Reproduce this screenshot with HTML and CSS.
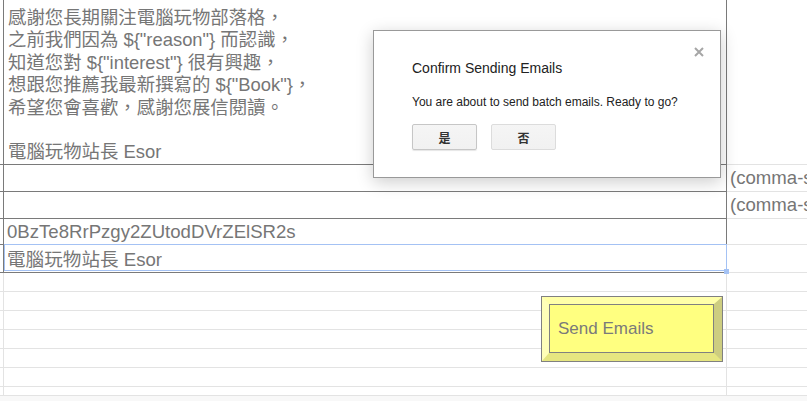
FILE: index.html
```html
<!DOCTYPE html>
<html>
<head>
<meta charset="utf-8">
<link rel="stylesheet" href="styles.css">
</head>
<body>
<div class="sheet">
  <div class="row r-msg">
    <div class="gut"></div>
    <div class="main">
      <div class="msg">感謝您長期關注電腦玩物部落格，<br>之前我們因為 ${"reason"} 而認識，<br>知道您對 ${"interest"} 很有興趣，<br>想跟您推薦我最新撰寫的 ${"Book"}，<br>希望您會喜歡，感謝您展信閱讀。<br><br>電腦玩物站長 Esor</div>
    </div>
    <div class="side"></div>
  </div>
  <div class="row r-b">
    <div class="gut"></div>
    <div class="main"></div>
    <div class="side"><span class="ctext">(comma-separated)</span></div>
  </div>
  <div class="row r-c">
    <div class="gut"></div>
    <div class="main"></div>
    <div class="side"><span class="ctext">(comma-separated)</span></div>
  </div>
  <div class="row r-d">
    <div class="gut"></div>
    <div class="main"><span class="ctext">0BzTe8RrPzgy2ZUtodDVrZElSR2s</span></div>
    <div class="side"></div>
  </div>
  <div class="row r-e">
    <div class="gut"></div>
    <div class="main"><span class="ctext low">電腦玩物站長 Esor</span></div>
    <div class="side"></div>
  </div>
  <div class="row lite"><div class="gut"></div><div class="main"></div><div class="side"></div></div>
  <div class="row lite"><div class="gut"></div><div class="main"></div><div class="side"></div></div>
  <div class="row lite"><div class="gut"></div><div class="main"></div><div class="side"></div></div>
  <div class="row lite"><div class="gut"></div><div class="main"></div><div class="side"></div></div>
  <div class="row lite"><div class="gut"></div><div class="main"></div><div class="side"></div></div>
  <div class="row lite"><div class="gut"></div><div class="main"></div><div class="side"></div></div>
  <div class="row lite last"><div class="gut"></div><div class="main"></div><div class="side"></div></div>
  <div class="footer"></div>
</div>

<div class="selection"></div>
<div class="handle"></div>

<div class="drawing">
  <div class="bevel">
    <div class="face">Send Emails</div>
  </div>
</div>

<div class="dialog">
  <svg class="close" width="10" height="10" viewBox="0 0 10 10"><path d="M1 1L9 9M9 1L1 9" stroke="#a6a6a6" stroke-width="2"/></svg>
  <div class="title">Confirm Sending Emails</div>
  <div class="text">You are about to send batch emails. Ready to go?</div>
  <div class="buttons">
    <button class="btn">是</button>
    <button class="btn">否</button>
  </div>
</div>
</body>
</html>
```

FILE: styles.css
```css
* { box-sizing: border-box; margin: 0; padding: 0; }
html, body { width: 807px; height: 401px; overflow: hidden; background: #fff; }
body {
  position: relative;
  font-family: "Liberation Sans", Arial, "Noto Sans CJK TC", sans-serif;
  color: #767676;
}
.sheet { display: flex; flex-direction: column; }
.row { display: flex; }
.gut { width: 3px; border-bottom: 1px solid #7a7a7a; }
.main {
  width: 724px;
  border-left: 1px solid #7a7a7a;
  border-right: 1px solid #7a7a7a;
  border-bottom: 1px solid #7a7a7a;
  overflow: hidden;
  white-space: nowrap;
}
.side {
  flex: 1;
  border-bottom: 1px solid #e3e3e3;
  overflow: hidden;
  white-space: nowrap;
}
.r-msg { height: 165px; }
.r-b, .r-c { height: 27px; }
.r-d { height: 26px; }
.r-e { height: 28px; }
.lite { height: 19px; }
.lite .gut, .lite .main, .lite .side { border-color: #e3e3e3; }
.last { height: 8px; }
.last .gut, .last .main, .last .side { border-bottom: none; }
.footer { height: 6px; background: #f8f8f8; border-top: 1px solid #e3e3e3; }

.msg {
  padding: 7px 0 0 4px;
  font-size: 18.4px;
  line-height: 22.4px;
  white-space: nowrap;
}
.ctext {
  display: block;
  padding: 2px 0 0 3px;
  font-size: 18.6px;
  line-height: 22px;
}
.ctext.low { padding-top: 4px; }

.selection {
  position: absolute;
  left: 4px; top: 244px;
  width: 723px; height: 27px;
  border: 1px solid #a4c2f4;
}
.handle {
  position: absolute;
  left: 724px; top: 269px;
  width: 5px; height: 5px;
  background: #a4c2f4;
}

.drawing {
  position: absolute;
  left: 541px; top: 296px;
  width: 182px; height: 66px;
  border: 1px solid #808080;
}
.bevel {
  width: 100%; height: 100%;
  border-style: solid;
  border-width: 7px 8px 8px 7px;
  border-color: #ffffa8 #cdcd80 #e6e680 #ffffb8;
}
.face {
  width: 100%; height: 100%;
  background: #ffff80;
  border: 1px solid #808080;
  padding-left: 8px;
  display: flex;
  align-items: center;
  font-size: 17px;
  color: #7a7a7a;
}

.dialog {
  position: absolute;
  left: 373px; top: 30px;
  width: 348px; height: 148px;
  background: #fff;
  border: 1px solid #999;
  box-shadow: 0 4px 16px rgba(0,0,0,0.2);
  padding: 28px 0 0 38px;
  color: #222;
}
.close { position: absolute; left: 320px; top: 16px; }
.title { font-size: 14px; line-height: 18px; }
.text { margin-top: 17px; font-size: 12px; line-height: 16px; }
.buttons { margin-top: 14px; display: flex; gap: 14px; }
.btn {
  width: 65px; height: 26px;
  font-family: "Noto Sans CJK TC", sans-serif;
  font-weight: bold;
  font-size: 12px;
  color: #333;
  background: linear-gradient(#f5f5f5, #f1f1f1);
  border: 1px solid #dcdcdc;
  border-radius: 2px;
}
.btn:first-child { border-color: #c6c6c6; box-shadow: 0 1px 1px rgba(0,0,0,0.1); }
```
